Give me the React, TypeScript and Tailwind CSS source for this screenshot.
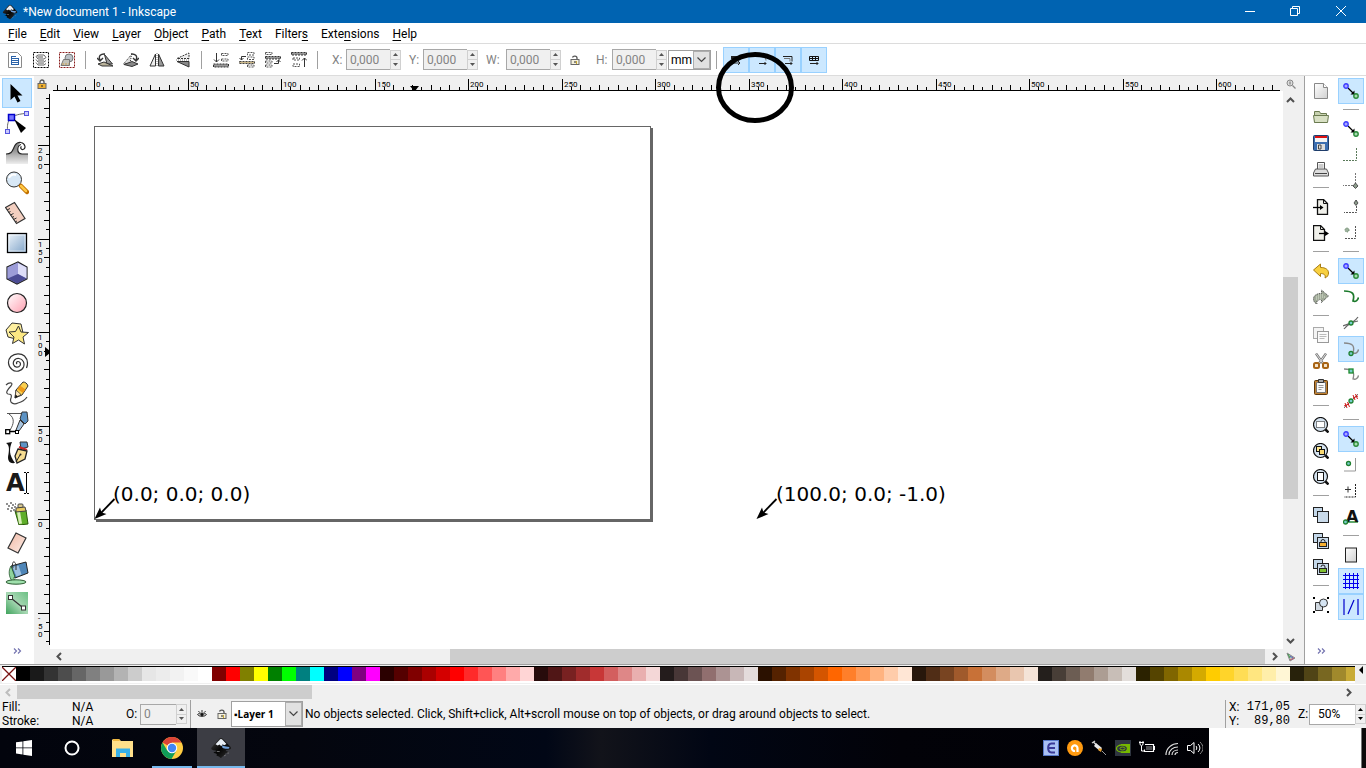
import type { ReactNode } from 'react';
import clsx from 'clsx';

// ─── Icon helpers ────────────────────────────────────────────────────────────

function Svg16({ children }: { children: ReactNode }) {
  return (
    <svg viewBox="0 0 16 16" className="w-4 h-4 shrink-0" fill="none" aria-hidden="true">
      {children}
    </svg>
  );
}

function Svg24({ children }: { children: ReactNode }) {
  return (
    <svg viewBox="0 0 24 24" className="w-6 h-6 shrink-0" fill="none" aria-hidden="true">
      {children}
    </svg>
  );
}

function Chevron({ dir, color = '#505050' }: { dir: 'up' | 'down' | 'left' | 'right'; color?: string }) {
  const points = {
    up:    '1,6 4.5,2.5 8,6',
    down:  '1,3 4.5,6.5 8,3',
    left:  '6,1 2.5,4.5 6,8',
    right: '3,1 6.5,4.5 3,8',
  };
  return (
    <svg viewBox="0 0 9 9" className="w-[9px] h-[9px]" fill="none" aria-hidden="true">
      <polyline points={points[dir]} stroke={color} strokeWidth="2" />
    </svg>
  );
}

function InkscapeLogo({ className }: { className: string }) {
  return (
    <svg viewBox="0 0 24 24" className={className} aria-hidden="true">
      <defs>
        <linearGradient id="ink" x1="0" y1="0" x2="1" y2="1">
          <stop offset="0" stopColor="#444" />
          <stop offset="0.5" stopColor="#050505" />
          <stop offset="1" stopColor="#333" />
        </linearGradient>
      </defs>
      <path d="M12 1.2c1 0 1.6.5 2.3 1.2l8 8.3c1.4 1.5.7 2.5-.8 3-2 .6-4.4.4-4.3 1.2.1.7 2.5.5 2.8 1.4.2.8-2.3 1-3.2 1.6-1 .7 0 1.5-1.5 2.2-1 .5-1.5 1-2.6 2.3-.6.7-1.4.6-2-.2-.8-1-2.5-1.3-3.5-2-.8-.6.9-1 .2-1.6-.8-.7-3.2-.6-3.5-1.6-.3-.8 2.8-.6 3-1.4.2-.8-3-.8-4.5-1.7-1.2-.7-1.5-1.7-.5-2.8l7.8-8.7c.7-.8 1.3-1.2 2.3-1.2z" fill="url(#ink)" />
      <path d="M12 2.2c.7 0 1.1.4 1.6.9l4.4 4.6-2.6 1.2-1.6-.9-1.5 2-1.9-1.7-2 .9-2.3-1.3 4.3-4.7c.5-.6.9-1 1.6-1z" fill="#e8eef5" />
      <path d="M13 9l3 1 4.8.8c.8.8.2 1.5-.9 1.9-2.3.7-4.6-.2-6.4-1z" fill="#6f9fd8" />
      <path d="M7.5 15.8h3M15.5 20.5l1.5-.6M19 17.5h1.5" stroke="#999" strokeWidth="0.8" />
    </svg>
  );
}

// ─── Selector toolbar icons ──────────────────────────────────────────────────

const INK = '#333';

const selectAllIcons: Array<[string, ReactNode]> = [
  ['Select all', <>
    <path d="M1.5 0.5h9l4 4v11h-13z" fill="#fff" stroke="#8a8a8a" />
    <path d="M4 4.5h5M4 6.5h8M4 8.5h8M4 10.5h8M4 12.5h8M4.5 4v9M11.5 6v7" stroke="#2a62a8" />
  </>],
  ['Select all in all layers', <>
    <rect x="0.5" y="0.5" width="15" height="15" stroke="#000" strokeDasharray="2 1" />
    <path d="M3 4.5l2-1.5h6l2 2.5-2 1.5H5zM3 7.5L5 10h6l2-1.5M3 10.5L5 13h6l2-1.5" stroke="#666" />
    <path d="M4 4h6v2H5zM5 8h6v1H5zM5 11h6v1H5z" fill="#aaa" />
  </>],
  ['Deselect', <>
    <rect x="0.5" y="0.5" width="15" height="15" stroke="#8a1c1c" strokeDasharray="2 1" />
    <circle cx="10" cy="6" r="4" fill="#bcc2c8" stroke="#777" />
    <path d="M2 13.5l2.5-6h6v6z" fill="#c3c3bb" stroke="#777" />
    <path d="M3 12h7" stroke="#c8a050" strokeDasharray="2 1" />
  </>],
];

const rotateIcons: Array<[string, ReactNode]> = [
  ['Rotate counter-clockwise', <>
    <path d="M3 8C1 4 4 1.5 8 2M0 6l3 3 3-3" stroke={INK} strokeWidth="1.4" />
    <path d="M7.5 2.5l8 9.5H10z" fill="#999" stroke={INK} />
    <path d="M1 12l6-2 9 4H5z" fill="#b9b29a" stroke={INK} />
  </>],
  ['Rotate clockwise', <>
    <path d="M13 8c2-4-1-6.5-5-6M10 6l3 3 3-3" stroke={INK} strokeWidth="1.4" />
    <path d="M8.5 2.5L0.5 12H7z" fill="#ddd" stroke={INK} strokeDasharray="1 1" />
    <path d="M1 12.5l8-3 6 2.5-6 2.5z" fill="#888" stroke={INK} />
  </>],
  ['Flip horizontal', <>
    <path d="M6.5 2v12H1z" fill="#eee" stroke={INK} />
    <path d="M9.5 2v12H15z" fill="#999" stroke={INK} />
    <path d="M8 1v14" stroke="#777" strokeDasharray="1 1" />
  </>],
  ['Flip vertical', <>
    <path d="M14 6.5H2L14 1z" fill="#eee" stroke={INK} strokeDasharray="2 1" />
    <path d="M14 9.5H2L14 15z" fill="#888" stroke={INK} />
    <path d="M1 8h14" stroke="#777" strokeDasharray="1 1" />
  </>],
];

const orderIcons: Array<[string, ReactNode]> = [
  ['Lower to bottom', <>
    <path d="M3.5 1v9M1 7.5L3.5 10 6 7.5" stroke={INK} />
    <path d="M8.5 1.5H15v2H8.5zM8.5 7H15v2H8.5z" stroke="#555" strokeDasharray="2 1" />
    <path d="M0.5 12h15v3h-15z" fill="#999" stroke="#333" strokeDasharray="2 1" />
  </>],
  ['Lower', <>
    <path d="M7 4.5H2.5V8M0.5 6l2 2 2-2" stroke={INK} />
    <path d="M8.5 0.5H15v2.5H8.5zM8.5 5H15v2.5H8.5zM8.5 13H15v2H8.5z" stroke="#555" strokeDasharray="2 1" />
    <path d="M0.5 9.5h15v2h-15z" fill="#cdb98a" stroke="#444" strokeDasharray="2 1" />
  </>],
  ['Raise', <>
    <path d="M9 11.5h4.5V8M11.5 10l2-2 2 2" stroke={INK} />
    <path d="M0.5 0.5H7v2H0.5zM0.5 9H7v2H0.5zM0.5 13H7v2H0.5z" stroke="#555" strokeDasharray="2 1" />
    <path d="M0.5 4.5h15v2.5h-15z" fill="#999" stroke="#333" strokeDasharray="2 1" />
  </>],
  ['Raise to top', <>
    <path d="M13.5 15V6M11 8.5L13.5 6 16 8.5" stroke={INK} />
    <path d="M0.5 0.5h15v2.5h-15z" fill="#999" stroke="#333" strokeDasharray="2 1" />
    <path d="M2 6h6.5v2H2zM2 12h6.5v2.5H2z" stroke="#555" strokeDasharray="2 1" />
  </>],
];

const transformIcons: Array<[string, ReactNode]> = [
  ['Scale stroke width', <>
    <path d="M3 4h9v3H3z" fill="#222" />
    <path d="M5 11h7M10 9l2 2-2 2" stroke="#222" />
  </>],
  ['Scale rounded corners', <>
    <path d="M4 4.5h4c2.5 0 4 1.5 4 4" stroke="#777" />
    <path d="M5 11.5h7M10.5 10l1.5 1.5-1.5 1.5" stroke="#222" />
  </>],
  ['Move gradients', <>
    <path d="M3 4.5h9v5" stroke="#222" />
    <path d="M4 6.5h6v3" stroke="#777" />
    <path d="M5 11.5h7M10.5 10l1.5 1.5-1.5 1.5" stroke="#222" />
  </>],
  ['Move patterns', <>
    <path d="M3.5 4.5h9v4h-9zM3.5 6.5h9M6.5 4.5v4M9.5 4.5v4" stroke="#111" />
    <path d="M4 11.5h8M10.5 10l1.5 1.5-1.5 1.5" stroke="#222" />
  </>],
];

function Padlock({ open = false }: { open?: boolean }) {
  return (
    <svg viewBox="0 0 10 10" className="w-[10px] h-[10px]" fill="none" aria-hidden="true">
      <path d={open ? 'M2.5 2.5C3 .5 7 .5 7 3v2' : 'M3 5V3a2 2 0 0 1 4 0v2'} stroke="#555" strokeWidth="1.3" />
      <rect x="1" y="4.5" width="8" height="5" fill={open ? '#f4f0dc' : '#f0b030'} stroke="#666" />
      <path d="M5 6v2" stroke="#222" />
      {open && <path d="M6.5 6v3" stroke="#c8a830" />}
    </svg>
  );
}

// ─── Toolbox icons ───────────────────────────────────────────────────────────

const toolIcons: Array<[string, ReactNode]> = [
  ['Selector', <path d="M5.5 3v16l4-3.5 3 6 3-1.5-3-5.5h5z" fill="#000" />],
  ['Edit paths by nodes', <>
    <path d="M2.5 19C2 10 4 4 20 2.5" stroke="#666" />
    <rect x="0.5" y="18.5" width="4" height="4" fill="#c9c9ff" stroke="#5555dd" />
    <rect x="19.5" y="0.5" width="4" height="4" fill="#c9c9ff" stroke="#5555dd" />
    <rect x="3.5" y="3.5" width="6" height="6" fill="#7777ff" stroke="#0000cc" strokeWidth="1.5" />
    <path d="M9 8l12 9-5 5z" fill="#000" />
  </>],
  ['Tweak objects', <>
    <path d="M1 13c5 0 6-2 7.5-5.5C10 3 13 1 16 1.5c-1 .5-4 3-3.5 7 .3 3 2 4.5 4.5 4.5h6v10H1z" fill="url(#waveFill)" />
    <path d="M1 13c5 0 6-2 7.5-5.5C10 3 13 1 16 1.5c4 .5 5.5 6 2 7-2 .3-3-2-1.5-3M16 3.5c-4 1-5 9 1 9.5h6" stroke="#222" strokeWidth="1.2" />
  </>],
  ['Zoom', <>
    <circle cx="9" cy="8.5" r="7.5" fill="#d8e8f6" stroke="#333" />
    <path d="M4 7c1-3 4-4 7-3" stroke="#fff" strokeWidth="2" />
    <path d="M16 15l6 6" stroke="#c07000" strokeWidth="4.5" strokeLinecap="round" />
    <path d="M16 15l5 5" stroke="#ffc844" strokeWidth="2.5" strokeLinecap="round" />
  </>],
  ['Measurement', <>
    <path d="M0.5 6.5L9.5 1.5 20 17.5l-8.5 5z" fill="#f3cfc0" stroke="#333" strokeWidth="1.2" />
    <path d="M2 9l3-1.5M3.5 11.5l2-1M5.5 14l3-1.5M7 16.5l2-1M8.5 18.5l3-1.5M10 21l2-1" stroke="#333" />
  </>],
  ['Rectangle', <>
    <rect x="2.5" y="2.5" width="19" height="19" fill="url(#rectFill)" stroke="#000" strokeWidth="1.3" />
    <rect x="4" y="4" width="16" height="16" stroke="#fff" strokeOpacity="0.6" />
  </>],
  ['3D box', <>
    <path d="M2 6l11-5 9 5v12l-10 5-10-5z" fill="#8484c8" stroke="#222" strokeWidth="1.2" />
    <path d="M2.5 6.5L13 1.5V13L2.5 17.5z" fill="#9c9cd8" />
    <path d="M13 2l8.5 4.5V17.5L13 13z" fill="#dedef8" />
    <path d="M3 17.5L13 13l8.5 4.5L12 22.5z" fill="#4b4b94" />
  </>],
  ['Ellipse', <circle cx="12" cy="12" r="9.5" fill="url(#circleFill)" stroke="#222" strokeWidth="1.2" />],
  ['Star', <>
    <path d="M1 9l6-7 9 1 2 9-7 6-8-2z" fill="#fff0a0" stroke="#333" />
    <path d="M13.5 5l2.5 6 7.5.5-5.5 4.5 1.5 7-6-4-6 3.5 1.5-6.5-5-5 6.5-.5z" fill="#fce883" stroke="#333" />
  </>],
  ['Spiral', <path d="M12 13c-1-1-.5-2.5 1-2.5 2 0 3 2 2 4-1.5 2.5-5.5 2-6.5-1-1-3.5 2-6.5 5.5-6 4 .5 6 4.5 4.5 8.5-2 4.5-8 5.5-11.5 2.5C2.5 15 2.5 9 6 5.5 10 2 16 2 19.5 5c3 3 3.5 8 2 12" stroke="#333" strokeWidth="1.2" />],
  ['Pencil', <>
    <path d="M1 4c3-3 8-3 5 1-3 3-6 7-3 8 3 0 4 1 3 4-2 5 3 7 7 5 4-1 7-3 9-6" stroke="#444" strokeWidth="1.2" />
    <path d="M10 17l1-8 7-8c2 0 4 1 5 4l-6 9z" fill="#fbd050" stroke="#333" />
    <path d="M15 4.5l5.5 4L18 12l-5.5-4z" fill="#ee9a18" />
    <path d="M10 17l1-8 5 4.5z" fill="#fbe8c0" stroke="#333" strokeWidth="0.7" />
    <path d="M10 17l.5-3.5 2.5 2z" fill="#111" />
  </>],
  ['Bezier', <>
    <path d="M4 3c6 4 5 10 1 16M2 2.5h15" stroke="#555" />
    <path d="M17 1h5l1 9-3 3-5-5z" fill="#5d93c4" stroke="#333" />
    <path d="M15 9l4 4-5 7-3-1z" fill="#a8c4de" stroke="#333" />
    <path d="M4 20.5h9" stroke="#000" strokeWidth="1.5" />
    <rect x="0.7" y="18.7" width="4" height="4" fill="#fff" stroke="#000" strokeWidth="1.3" />
    <rect x="10.5" y="19.5" width="3" height="3" fill="#fff" stroke="#000" />
  </>],
  ['Calligraphy', <>
    <path d="M1 2l6-1c-3 7-3 13 3 21-6 1-8-3-6.5-9C4.5 7 4 4 1 2z" fill="#111" />
    <path d="M15 1h7l1 5-7 2z" fill="#5d93c4" stroke="#333" />
    <path d="M14 6l8 3" stroke="#c22" strokeWidth="2" />
    <path d="M13 8l9 2-2 8-8 4-2-7z" fill="#f6dc90" stroke="#222" strokeWidth="1.3" />
    <path d="M11 21l4-7" stroke="#222" />
    <circle cx="15.5" cy="13.5" r="1" fill="#222" />
  </>],
  ['Text', <>
    <path d="M21.5 2v20M19 1.5h2M22 1.5h2M19 22.5h2M22 22.5h2" stroke="#000" />
    <text x="1" y="20" fontSize="24" fontWeight="700" fontFamily="DejaVu Sans, sans-serif" fill="#1a1a1a">A</text>
  </>],
  ['Spray', <>
    <path d="M1 3h2M5 2h2M3 5h2M7 4h2M2 8h2M6 7h2M9 6h2M5 10h2M8 9h2M10 3h1" stroke="#222" strokeWidth="1.2" />
    <rect x="13" y="3" width="5" height="4" rx="1" fill="#d8c890" stroke="#444" />
    <path d="M10 10l11-1 2 14-9 1z" fill="#5fae2a" stroke="#2a5a08" />
    <path d="M12 11l3-.5 2 12-3 .5z" fill="#d8f0b8" />
    <path d="M11 7l9-1 1 4-10 1z" fill="#e8c860" stroke="#444" />
  </>],
  ['Eraser', <path d="M11 2l10 5-8 15-10-5z" fill="url(#eraserFill)" stroke="#333" strokeWidth="1.2" />],
  ['Paint bucket', <>
    <path d="M6 5l15-4 2 11-13 5z" fill="#4f86b8" stroke="#222" />
    <path d="M7.5 6l6-1.5 3 9-5 2z" fill="#9dc0de" />
    <path d="M8 7c-2-7 2-8 3-3v5" stroke="#333" />
    <path d="M6 5c-3 5-2 11 1 15h3c-1-3-2-4 0-4z" fill="#8fd49c" stroke="#2a5a30" strokeWidth="0.8" />
    <ellipse cx="11" cy="21" rx="10" ry="2.2" fill="#9fe0ac" stroke="#2a5a30" />
  </>],
  ['Gradient', <>
    <rect x="1" y="1" width="22" height="22" fill="url(#greenFill)" />
    <path d="M6 7l11 9" stroke="#333" strokeWidth="1.2" />
    <rect x="3.5" y="4.5" width="4" height="4" fill="#fff" stroke="#333" />
    <rect x="16.5" y="15" width="4" height="4" fill="#fff" stroke="#333" />
  </>],
];

function SharedGradients() {
  return (
    <svg className="absolute w-0 h-0" aria-hidden="true">
      <defs>
        <linearGradient id="waveFill" x1="0" y1="0" x2="0" y2="1">
          <stop offset="0.3" stopColor="#8a8a8a" />
          <stop offset="1" stopColor="#eee" />
        </linearGradient>
        <linearGradient id="rectFill" x1="0" y1="0" x2="1" y2="1">
          <stop offset="0" stopColor="#eef5fb" />
          <stop offset="1" stopColor="#7fa3c8" />
        </linearGradient>
        <linearGradient id="circleFill" x1="0" y1="0" x2="1" y2="1">
          <stop offset="0" stopColor="#fff" />
          <stop offset="1" stopColor="#ff9fb0" />
        </linearGradient>
        <linearGradient id="eraserFill" x1="0" y1="0" x2="1" y2="1">
          <stop offset="0" stopColor="#f0b8a4" />
          <stop offset="1" stopColor="#fdeee8" />
        </linearGradient>
        <linearGradient id="greenFill" x1="0" y1="1" x2="1" y2="0">
          <stop offset="0" stopColor="#3fa35c" />
          <stop offset="0.5" stopColor="#a8d8b4" />
          <stop offset="1" stopColor="#6cc084" />
        </linearGradient>
        <linearGradient id="greyFill" x1="0" y1="0" x2="1" y2="1">
          <stop offset="0" stopColor="#fff" />
          <stop offset="1" stopColor="#d0d0d0" />
        </linearGradient>
      </defs>
    </svg>
  );
}

// ─── Command bar icons ───────────────────────────────────────────────────────

interface BarItem {
  label: string;
  icon: ReactNode;
  pressed?: boolean;
}

const lens = (
  <>
    <circle cx="7.5" cy="7.5" r="7" fill="#d5e3f0" stroke="#111" strokeWidth="1.2" />
    <path d="M12.5 12.5l3 3" stroke="#111" strokeWidth="2.5" />
  </>
);

const stackedPages = (
  <>
    <rect x="0.5" y="0.5" width="9" height="9" fill="#c4d8ea" stroke="#222" />
    <rect x="4.5" y="4.5" width="11" height="11" fill="#c9daea" stroke="#222" />
  </>
);

const commandGroups: BarItem[][] = [
  [
    { label: 'New', icon: <><path d="M1.5 0.5h9l4 4v11h-13z" fill="url(#greyFill)" stroke="#888" /><path d="M10.5 0.5v4h4" fill="#fff" stroke="#888" /></> },
    { label: 'Open', icon: <><path d="M1.5 13.5v-11h5l1 2h6v3" fill="#c8d2b0" stroke="#6a7a50" /><path d="M0.5 6.5h15l-1 7h-13z" fill="#d8e0c4" stroke="#6a7a50" /></> },
    { label: 'Save', icon: <><rect x="0.5" y="0.5" width="15" height="15" rx="1" fill="#3c6eb0" stroke="#1e3c6a" /><path d="M2 1h12v6H2z" fill="#f4f4f4" /><path d="M2 1h12v2H2z" fill="#dd1111" /><path d="M4 9h8v6H4z" fill="#ddd" /><path d="M5.5 10h2.5v4H5.5z" stroke="#444" /></> },
    { label: 'Print', icon: <><path d="M4.5 8V1.5h7V8" fill="#fff" stroke="#555" /><path d="M5.5 4h5M5.5 6h5" stroke="#999" /><path d="M2.5 8h11l2 4v3H0.5v-3z" fill="#ddd" stroke="#555" /><path d="M2 12.5h12" stroke="#444" /></> },
  ],
  [
    { label: 'Import', icon: <><path d="M4.5 0.5h6l4 4v11h-10z" fill="#f0f0ea" stroke="#111" strokeWidth="1.3" /><path d="M10.5 0.5v4h4" stroke="#111" /><path d="M0 8.5h8" stroke="#000" strokeWidth="1.3" /><path d="M7 6l3.5 2.5L7 11z" fill="#000" /></> },
    { label: 'Export', icon: <><path d="M0.5 0.5h7l4 4v11h-11z" fill="#f0f0ea" stroke="#111" strokeWidth="1.3" /><path d="M7.5 0.5v4h4" stroke="#111" /><path d="M6 8.5h7" stroke="#000" strokeWidth="1.3" /><path d="M12 6l4 2.5-4 2.5z" fill="#000" /></> },
  ],
  [
    { label: 'Undo', icon: <path d="M0.5 7l7-6v3.5c5 0 8 2 8 5.5 0 2-1 4-3.5 5 1-3-1-4.5-4.5-4.5v3z" fill="#f8d040" stroke="#a87c10" /> },
    { label: 'Redo', icon: <><path d="M15.5 7l-7-6v3.5c-5 0-8 2-8 5.5 0 2 1 4 3.5 5-1-3 1-4.5 4.5-4.5v3z" fill="#a0aa98" stroke="#444" strokeDasharray="1 1" /><path d="M3 8h10M3 10h6M5 6h6" stroke="#dde5d5" strokeDasharray="1 1" /></> },
  ],
  [
    { label: 'Copy', icon: <><rect x="0.5" y="0.5" width="10" height="11" fill="#f4f4f4" stroke="#aaa" /><rect x="4.5" y="4.5" width="11" height="11" fill="#fafafa" stroke="#999" /><path d="M6.5 7.5h7M6.5 9.5h7M6.5 11.5h5" stroke="#bbb" /></> },
    { label: 'Cut', icon: <><path d="M3 0.5l7 10M13 0.5l-7 10" stroke="#777" strokeWidth="2.4" /><path d="M3 0.5l7 10M13 0.5l-7 10" stroke="#ddd" /><rect x="1" y="10" width="5" height="5" rx="1.5" fill="#f4e4cc" stroke="#a86414" strokeWidth="2" /><rect x="10" y="10" width="5" height="5" rx="1.5" fill="#f4e4cc" stroke="#a86414" strokeWidth="2" /></> },
    { label: 'Paste', icon: <><rect x="1.5" y="1.5" width="13" height="14" rx="1" fill="#c08030" stroke="#5a3408" /><path d="M3.5 3.5h9v10h-9z" fill="#fafafa" stroke="#777" /><path d="M5.5 0.5h5v3h-5z" fill="#aaa" stroke="#333" /><path d="M5.5 6.5h5M5.5 8.5h5M5.5 10.5h3" stroke="#999" /></> },
  ],
  [
    { label: 'Zoom selection', icon: <>{lens}<rect x="3.5" y="4.5" width="8" height="6" fill="#fff" stroke="#111" strokeDasharray="1 1" /></> },
    { label: 'Zoom drawing', icon: <>{lens}<rect x="3.5" y="3.5" width="5" height="5" fill="#ffe890" stroke="#111" /><rect x="6.5" y="6.5" width="5" height="5" fill="#f8d870" stroke="#111" /></> },
    { label: 'Zoom page', icon: <>{lens}<rect x="4.5" y="3.5" width="6" height="8" fill="#fff" stroke="#111" /></> },
  ],
  [
    { label: 'Duplicate', icon: stackedPages },
    { label: 'Create clone', icon: <>{stackedPages}<path d="M8 10V8.5a2 2 0 0 1 4 0V10" stroke="#222" /><rect x="6.5" y="9.5" width="7" height="4" fill="#f8b030" stroke="#222" /></> },
    { label: 'Unlink clone', icon: <>{stackedPages}<path d="M8 8a2 2 0 0 1 4 0v2" stroke="#222" /><rect x="6.5" y="9.5" width="7" height="4" fill="#80c030" stroke="#222" /></> },
  ],
  [
    { label: 'Group', icon: <><path d="M0 0h2v2H0zM14 0h2v2h-2zM0 14h2v2H0zM14 14h2v2h-2z" fill="#000" /><path d="M2.5 5.5h7v8h-7z" fill="#d0d8e0" stroke="#333" /><circle cx="10.5" cy="6" r="4" fill="#d5e4f2" stroke="#333" /></> },
  ],
];

// ─── Snap bar icons ──────────────────────────────────────────────────────────

const snapMain = (
  <>
    <path d="M5 5l6 6" stroke="#000" strokeWidth="1.3" />
    <path d="M11.5 7.5v4h-4z" fill="#000" />
    <circle cx="3" cy="3" r="2.2" fill="#a8a8ff" stroke="#3c3cff" strokeWidth="1.4" />
    <circle cx="13" cy="13" r="2.2" fill="#a8dcb0" stroke="#2a8a3a" strokeWidth="1.4" />
  </>
);

const nodeAt = (x: number, y: number) => (
  <circle cx={x} cy={y} r="2" fill="#7cc" stroke="#1f8030" strokeWidth="1.3" />
);

const snapGroups: BarItem[][] = [
  [{ label: 'Enable snapping', icon: snapMain, pressed: true }],
  [
    { label: 'Snap bounding boxes', icon: snapMain },
    { label: 'Snap to edges', icon: <path d="M13.5 1v12.5H0" stroke="#5a7a5a" strokeDasharray="2 1" /> },
    { label: 'Snap to corners', icon: <><path d="M12.5 0v12.5H0" stroke="#777" strokeDasharray="2 1" /><path d="M12.5 10l2.5 3-2.5 2.5L10 13z" fill="#8a9a8a" stroke="#555" /></> },
    { label: 'Snap edge midpoints', icon: <><path d="M13.5 1v12.5H1" stroke="#555" strokeDasharray="2 1" /><path d="M13 1l2 3-2 2.5L11 4z" fill="#8a9a8a" stroke="#555" /></> },
    { label: 'Snap centers', icon: <><path d="M12.5 1v12.5H1" stroke="#555" strokeDasharray="2 1" /><circle cx="4" cy="5" r="2" fill="#9cb09c" stroke="#567a56" strokeDasharray="1 1" /></> },
  ],
  [
    { label: 'Snap nodes', icon: snapMain, pressed: true },
    { label: 'Snap to paths', icon: <path d="M1 2c9 0 11 3 9 10 3 1 5-1 5.5-3.5" stroke="#1c7a2c" strokeWidth="1.7" /> },
    { label: 'Snap path intersections', icon: <><path d="M0 11C5 9 11 8 15 2M1 14c4-5 8-7 14-8" stroke="#666" strokeWidth="1.2" />{nodeAt(8, 8)}</> },
    { label: 'Snap cusp nodes', icon: <><path d="M1 2c9 0 11 3 9 10 3 1 5-1 5.5-3.5" stroke="#888" strokeWidth="1.4" />{nodeAt(8, 12.5)}</>, pressed: true },
    { label: 'Snap smooth nodes', icon: <><path d="M1 2c9 0 11 3 9 10 3 1 5-1 5.5-3.5" stroke="#888" strokeWidth="1.3" /><rect x="6" y="2" width="4" height="4" fill="#7cc" stroke="#1c8a2c" strokeWidth="1.3" /></> },
    { label: 'Snap line midpoints', icon: <><path d="M1 15l14-14" stroke="#777" />{nodeAt(8, 8)}<path d="M2 10l2 5M4.5 9l2 5M1 13l5-2M10 2l2 5M12.5 1l2 5M10 5l5-2" stroke="#d01818" /></> },
  ],
  [
    { label: 'Snap other points', icon: snapMain, pressed: true },
    { label: 'Snap object centers', icon: <><path d="M12.5 1v13H1" stroke="#999" />{nodeAt(5.5, 6.5)}</> },
    { label: 'Snap rotation centers', icon: <><path d="M12.5 1v13H1" stroke="#222" strokeDasharray="2 1" /><path d="M2 6.5h6M5 3.5v6" stroke="#333" /></> },
    { label: 'Snap text baseline', icon: <><path d="M1 13h14" stroke="#2a8a3a" strokeWidth="1.5" /><text x="3" y="13" fontSize="16" fontWeight="700" fontFamily="DejaVu Sans, sans-serif" fill="#111">A</text>{nodeAt(2.5, 13)}</> },
  ],
  [
    { label: 'Snap to page border', icon: <rect x="2.5" y="1" width="11" height="14" fill="url(#greyFill)" stroke="#222" /> },
    { label: 'Snap to grids', icon: <path d="M2.5 0v16M6.5 0v16M10.5 0v16M14.5 0v16M0 2.5h16M0 6.5h16M0 10.5h16M0 14.5h16" stroke="#0000ee" />, pressed: true },
    { label: 'Snap guides', icon: <path d="M1 0v16M15 0v16M5 15L11 1" stroke="#0000cc" strokeWidth="1.2" />, pressed: true },
  ],
];

// ─── Palette ─────────────────────────────────────────────────────────────────

const PALETTE = (
  '000000 1a1a1a 333333 4d4d4d 666666 808080 999999 b3b3b3 cccccc e6e6e6 ececec f2f2f2 f9f9f9 ffffff ' +
  '800000 ff0000 808000 ffff00 008000 00ff00 008080 00ffff 000080 0000ff 800080 ff00ff ' +
  '2b0000 550000 800000 aa0000 d40000 ff0000 ff2a2a ff5555 ff8080 ffaaaa ffd5d5 ' +
  '280b0b 501616 782121 a02c2c c83737 d35f5f de8787 e9afaf f4d7d7 ' +
  '241c1c 483737 6c5353 916f6f ac9393 c8b7b7 e3dbdb ' +
  '2b1100 552200 803300 aa4400 d45500 ff6600 ff7f2a ff9955 ffb380 ffccaa ffe6d5 ' +
  '28170b 502d16 784421 a05a2c c87137 d38d5f deaa87 e9c6af f4e3d7 ' +
  '241f1c 483e37 6c5d53 917c6f ac9d93 c8beb7 e3dedb ' +
  '2b2200 554400 806600 aa8800 d4aa00 ffcc00 ffd42a ffdd55 ffe680 ffeeaa fff6d5 ' +
  '28220b 504416 786721 a0892c c8ab37 d3bc5f decd87 e9ddaf f4eed7'
).split(' ');

// ─── Shared controls ─────────────────────────────────────────────────────────

function VSep() {
  return (
    <div className="w-3 h-[18px] flex pl-[5px] shrink-0">
      <div className="w-px h-full bg-[#a0a0a0]" />
    </div>
  );
}

function IconButton({ label, children, pressed = false }: { label: string; children: ReactNode; pressed?: boolean }) {
  return (
    <button
      type="button"
      aria-label={label}
      title={label}
      className={clsx(
        'w-[26px] h-[26px] shrink-0 flex items-center justify-center border',
        pressed ? 'bg-[#cce8ff] border-[#99d1ff]' : 'border-transparent',
      )}
    >
      <Svg16>{children}</Svg16>
    </button>
  );
}

interface SpinProps {
  id: string;
  value: string;
  width: string;
  disabled?: boolean;
}

function Spin({ id, value, width, disabled = false }: SpinProps) {
  return (
    <div className="flex items-center">
      <input
        id={id}
        type="text"
        defaultValue={value}
        disabled={disabled}
        className={clsx(
          'h-[21px] border border-r-0 border-[#a8a8a8] outline-none',
          width,
          disabled ? 'pl-[3px] bg-[#f0f0f0] text-[#838383]' : 'pl-2 bg-white text-black',
        )}
      />
      <div className="w-[11px] h-5 flex flex-col bg-[#f0f0f0] border border-[#d0d0d0]">
        {(['Increase', 'Decrease'] as const).map((name, i) => (
          <button
            key={name}
            type="button"
            aria-label={name}
            className={clsx('flex-1 flex items-center justify-center', i === 0 && 'border-b border-[#d0d0d0]')}
          >
            <svg viewBox="0 0 5 3" className="w-[5px] h-[3px]" aria-hidden="true">
              <path d={i === 0 ? 'M0 3L2.5 0 5 3z' : 'M0 0L2.5 3 5 0z'} fill={disabled ? '#555' : '#000'} />
            </svg>
          </button>
        ))}
      </div>
    </div>
  );
}

interface DropDownProps {
  label: string;
  value: string;
  className: string;
  textClass?: string;
}

function DropDown({ label, value, className, textClass }: DropDownProps) {
  return (
    <div className={clsx('relative border border-[#a0a0a0] bg-white', className)}>
      <select aria-label={label} className={clsx('w-full h-full pl-[2px] pr-4 appearance-none outline-none', textClass)}>
        <option>{value}</option>
      </select>
      <div className="absolute inset-y-0 right-0 w-[17px] flex items-center justify-center bg-[#e1e1e1] border border-[#adadad] pointer-events-none">
        <svg viewBox="0 0 9 6" className="w-[9px] h-[6px]" fill="none" aria-hidden="true">
          <polyline points="0.5,0.5 4.5,4.5 8.5,0.5" stroke="#444" strokeWidth="1.2" />
        </svg>
      </div>
    </div>
  );
}

// ─── Window chrome ───────────────────────────────────────────────────────────

function TitleBar() {
  return (
    <header className="h-[23px] shrink-0 flex items-center bg-[#0063b1] text-white">
      <InkscapeLogo className="w-4 h-4 ml-[2px] mr-[5px]" />
      <h1 className="flex-1">*New document 1 - Inkscape</h1>
      <div className="flex pr-px pb-[2px]">
        <button type="button" aria-label="Minimize" className="w-[45px] h-5 flex items-center justify-center">
          <svg viewBox="0 0 10 10" className="w-[10px] h-[10px]" fill="none"><path d="M0 5.5h10" stroke="currentColor" /></svg>
        </button>
        <button type="button" aria-label="Restore" className="w-[45px] h-5 flex items-center justify-center">
          <svg viewBox="0 0 10 10" className="w-[10px] h-[10px]" fill="none"><path d="M0.5 2.5h7v7h-7zM2.5 2.5v-2h7v7h-2" stroke="currentColor" /></svg>
        </button>
        <button type="button" aria-label="Close" className="w-12 h-5 flex items-center justify-center">
          <svg viewBox="0 0 10 10" className="w-[10px] h-[10px]" fill="none"><path d="M0 0l10 10M10 0L0 10" stroke="currentColor" /></svg>
        </button>
      </div>
    </header>
  );
}

const MENUS = ['_File', '_Edit', '_View', '_Layer', '_Object', '_Path', '_Text', 'Filter_s', 'Exte_nsions', '_Help'];

function MenuBar() {
  return (
    <nav className="h-[21px] shrink-0 flex items-center gap-[13px] px-2 pt-px bg-white border-b border-[#dcdcdc]">
      {MENUS.map((item) => {
        const [before, rest] = item.split('_');
        return (
          <button key={item} type="button">
            {before}<span className="underline underline-offset-2">{rest[0]}</span>{rest.slice(1)}
          </button>
        );
      })}
    </nav>
  );
}

function ControlBar() {
  const label = 'text-[#838383]';
  return (
    <div className="h-8 shrink-0 flex items-center pl-[2px] bg-white border-b border-[#dcdcdc]">
      {selectAllIcons.map(([name, icon]) => <IconButton key={name} label={name}>{icon}</IconButton>)}
      <VSep />
      {rotateIcons.map(([name, icon]) => <IconButton key={name} label={name}>{icon}</IconButton>)}
      <VSep />
      {orderIcons.map(([name, icon]) => <IconButton key={name} label={name}>{icon}</IconButton>)}
      <VSep />
      <div className="flex items-center pl-2 pr-px">
        <label htmlFor="pos-x" className={clsx(label, 'w-[14px]')}>X:</label>
        <Spin id="pos-x" value="0,000" width="w-11" disabled />
        <label htmlFor="pos-y" className={clsx(label, 'w-[14px] ml-2')}>Y:</label>
        <Spin id="pos-y" value="0,000" width="w-11" disabled />
        <label htmlFor="size-w" className={clsx(label, 'w-5 ml-2')}>W:</label>
        <Spin id="size-w" value="0,000" width="w-11" disabled />
        <button type="button" aria-label="Lock width and height" className="w-[26px] flex justify-center ml-px">
          <Padlock open />
        </button>
        <label htmlFor="size-h" className={clsx(label, 'w-4 ml-2')}>H:</label>
        <Spin id="size-h" value="0,000" width="w-11" disabled />
      </div>
      <DropDown label="Units" value="mm" className="w-[43px] h-5 shrink-0" />
      <VSep />
      {transformIcons.map(([name, icon]) => (
        <IconButton key={name} label={name} pressed>{icon}</IconButton>
      ))}
    </div>
  );
}

function MoreButton() {
  return (
    <button type="button" aria-label="More" className="mt-auto mb-2 w-4 h-[10px] flex items-center justify-center">
      <svg viewBox="0 0 9 6" className="w-[9px] h-[6px]" fill="none" aria-hidden="true">
        <path d="M1 0.5l2.5 2.5L1 5.5M5 0.5l2.5 2.5L5 5.5" stroke="#7474b0" strokeWidth="1.2" />
      </svg>
    </button>
  );
}

function Toolbox() {
  return (
    <aside className="w-[34px] shrink-0 flex flex-col items-center pt-[2px] bg-white">
      {toolIcons.map(([name, icon], i) => (
        <button
          key={name}
          type="button"
          aria-label={name}
          title={name}
          className={clsx(
            'w-[30px] h-[30px] shrink-0 flex items-center justify-center border',
            i === 0 ? 'bg-[#cce8ff] border-[#99d1ff]' : 'border-transparent',
          )}
        >
          <Svg24>{icon}</Svg24>
        </button>
      ))}
      <MoreButton />
    </aside>
  );
}

function BarColumn({ groups, more = false }: { groups: BarItem[][]; more?: boolean }) {
  return (
    <div className="w-[30px] flex flex-col items-center pt-[2px]">
      {groups.map((group, g) => (
        <div key={group[0].label} className="flex flex-col items-center">
          {g > 0 && (
            <div className="h-3 pt-[5px]">
              <div className="w-4 h-px bg-[#a0a0a0]" />
            </div>
          )}
          {group.map((item) => (
            <IconButton key={item.label} label={item.label} pressed={item.pressed}>{item.icon}</IconButton>
          ))}
        </div>
      ))}
      {more && <MoreButton />}
    </div>
  );
}

// ─── Rulers ──────────────────────────────────────────────────────────────────

// px per 5 mm at 50% zoom
const TICK = 9.35;
const tickLength = (k: number) => (k % 10 === 0 ? 11 : k % 2 === 0 ? 5 : 3);

function range(from: number, to: number) {
  return Array.from({ length: to - from + 1 }, (_, i) => from + i);
}

function HorizontalRuler() {
  const zero = 44;
  return (
    <svg className="w-full h-[15px] block" aria-label="Horizontal ruler">
      <g shapeRendering="crispEdges">
        <rect x="3" y="14" width="100%" height="1" />
        {range(-4, 300).map((k) => (
          <rect key={k} x={Math.round(zero + k * TICK)} y={14 - tickLength(k)} width="1" height={tickLength(k)} />
        ))}
      </g>
      {range(0, 12).map((n) => (
        <text key={n} x={Math.round(zero + n * 10 * TICK) + 2} y="11" fontSize="8">{n * 50}</text>
      ))}
      <path d="M360 10h9l-4 5h-1z" />
    </svg>
  );
}

function VerticalRuler() {
  const zero = 428;
  return (
    <svg className="w-4 h-full block" aria-label="Vertical ruler">
      <g shapeRendering="crispEdges">
        <rect x="15" y="3" width="1" height="100%" />
        {range(-60, 45).filter((k) => zero - k * TICK > 3).map((k) => (
          <rect key={k} x={15 - tickLength(k)} y={Math.round(zero - k * TICK)} width={tickLength(k)} height="1" />
        ))}
      </g>
      {range(-1, 4).map((n) => (
        <g key={n} fontSize="8">
          {String(n * 50).split('').map((ch, i) => (
            <text key={i} x="4" y={Math.round(zero - n * 10 * TICK) + 8 + i * 8}>{ch}</text>
          ))}
        </g>
      ))}
      <path d="M11 256v10l5-4v-2z" />
    </svg>
  );
}

// ─── Drawing area ────────────────────────────────────────────────────────────

function Arrow({ className }: { className: string }) {
  return (
    <svg viewBox="0 0 22 22" className={clsx('absolute w-[22px] h-[22px]', className)} fill="none" aria-hidden="true">
      <path d="M20.5 1L6 16" stroke="#000" strokeWidth="1.8" />
      <path d="M0.5 21L6 9.5l1.5 5L12.5 16z" fill="#000" />
    </svg>
  );
}

function Canvas() {
  const note = "absolute text-xl leading-6 whitespace-nowrap font-['DejaVu_Sans',sans-serif]";
  return (
    <section className="relative flex-1 overflow-hidden bg-white">
      {/* Page with its drop shadow */}
      <div className="absolute left-[44px] top-[35px] w-[557px] h-[394px] border border-[#666] shadow-[2px_2px_0_#666]" />
      <Arrow className="left-[44px] top-[407px]" />
      <p className={clsx(note, 'left-[63px] top-[391px]')}>(0.0; 0.0; 0.0)</p>
      <Arrow className="left-[706px] top-[407px]" />
      <p className={clsx(note, 'left-[726px] top-[391px]')}>(100.0; 0.0; -1.0)</p>
    </section>
  );
}

function DocumentArea() {
  return (
    <div className="flex-1 min-w-0 flex flex-col bg-[#f0f0f0]">
      <div className="h-[15px] shrink-0 flex">
        <button type="button" aria-label="Lock guides" className="w-4 shrink-0 flex items-center justify-center">
          <Padlock />
        </button>
        <div className="flex-1 min-w-0 pr-[3px]"><HorizontalRuler /></div>
        <button type="button" aria-label="Zoom when resized" className="w-[15px] shrink-0 flex items-center justify-center">
          <svg viewBox="0 0 10 10" className="w-[10px] h-[10px]" fill="none" aria-hidden="true">
            <circle cx="4" cy="4" r="3" fill="#ddd" stroke="#888" />
            <path d="M6.5 6.5L9.5 9.5M4 2.5v3" stroke="#888" strokeWidth="1.3" />
          </svg>
        </button>
      </div>

      <div className="flex-1 min-h-0 flex">
        <div className="w-4 shrink-0 relative">
          <div className="absolute inset-x-0 top-0 bottom-1"><VerticalRuler /></div>
        </div>
        <Canvas />
        <div className="w-[15px] shrink-0 flex flex-col">
          <button type="button" aria-label="Scroll up" className="h-[18px] flex items-center justify-center"><Chevron dir="up" /></button>
          <div className="flex-[168]" />
          <div className="flex-[222] bg-[#cdcdcd]" />
          <div className="flex-[132]" />
          <button type="button" aria-label="Scroll down" className="h-[18px] flex items-center justify-center"><Chevron dir="down" /></button>
        </div>
      </div>

      <div className="h-[15px] shrink-0 flex pl-4">
        <button type="button" aria-label="Scroll left" className="w-4 pl-[2px] flex items-center justify-center"><Chevron dir="left" /></button>
        <div className="flex-[384]" />
        <div className="flex-[815] bg-[#cdcdcd]" />
        <button type="button" aria-label="Scroll right" className="w-[18px] flex items-center justify-center"><Chevron dir="right" /></button>
        <button type="button" aria-label="Color management" className="w-[15px] flex items-center justify-center">
          <svg viewBox="0 0 10 10" className="w-[10px] h-[10px]" fill="none" aria-hidden="true">
            <path d="M1 1l3 8 5-3z" fill="#b8c8b8" stroke="#888" />
            <path d="M2 2l2 4" stroke="#3a9a4a" />
            <path d="M4 8l4-2" stroke="#c05070" />
            <path d="M4 4l3 2" stroke="#5060c0" />
          </svg>
        </button>
      </div>
    </div>
  );
}

// ─── Bottom bars ─────────────────────────────────────────────────────────────

function PaletteBar() {
  return (
    <div className="shrink-0 bg-[#f0f0f0]">
      <div className="h-5 flex border-t border-[#a0a0a0]">
        <div className="flex-1 min-w-0 flex flex-col pl-[2px] pt-px">
          <div className="h-px bg-black" />
          <div className="h-[14px] flex overflow-hidden">
            <button type="button" aria-label="No paint" className="w-[14px] h-[14px] shrink-0 bg-white">
              <svg viewBox="0 0 14 14" className="w-[14px] h-[14px]" fill="none" aria-hidden="true">
                <path d="M0 0l14 14M14 0L0 14" stroke="#7a1414" strokeWidth="1.3" />
              </svg>
            </button>
            {PALETTE.map((hex, i) => (
              <button
                key={i}
                type="button"
                aria-label={`#${hex}`}
                className="w-[14px] h-[14px] shrink-0"
                style={{ backgroundColor: `#${hex}` }}
              />
            ))}
          </div>
          <div className="h-[2px] bg-white" />
        </div>
        <button type="button" aria-label="Palette menu" className="w-[11px] shrink-0 flex justify-center pt-px">
          <svg viewBox="0 0 4 8" className="w-1 h-2" aria-hidden="true"><path d="M4 0v8L0 4z" /></svg>
        </button>
      </div>
      <div className="h-4 flex items-center border-t border-white pb-px">
        <button type="button" aria-label="Scroll palette left" className="w-[17px] flex justify-center"><Chevron dir="left" color="#bdbdbd" /></button>
        <div className="flex-[295] h-[14px] bg-[#cdcdcd]" />
        <div className="flex-[1028]" />
        <button type="button" aria-label="Scroll palette right" className="w-[17px] mr-[9px] flex justify-center"><Chevron dir="right" /></button>
      </div>
    </div>
  );
}

function StatusBar() {
  const mono = "text-right font-['Liberation_Mono',monospace]";
  return (
    <footer className="h-7 shrink-0 flex items-center bg-[#f0f0f0]">
      <dl className="grid grid-cols-[70px_34px] leading-[14px] pl-[2px]">
        <dt>Fill:</dt><dd>N/A</dd>
        <dt>Stroke:</dt><dd>N/A</dd>
      </dl>
      <label htmlFor="opacity" className="w-[14px] ml-5">O:</label>
      <Spin id="opacity" value="0" width="w-9" disabled />
      <div className="w-px h-7 ml-[3px] bg-[#a0a0a0]" />
      <button type="button" aria-label="Toggle layer visibility" className="w-5 ml-px flex justify-center">
        <svg viewBox="0 0 10 8" className="w-[10px] h-2" fill="none" aria-hidden="true">
          <path d="M0.5 4.5C2 2.5 8 2.5 9.5 4.5 8 7 2 7 0.5 4.5z" fill="#bbb" stroke="#333" />
          <circle cx="5" cy="4.5" r="1.6" fill="#111" />
          <path d="M1.5 1l1 1.5M5 0v2M8.5 1l-1 1.5" stroke="#333" />
        </svg>
      </button>
      <button type="button" aria-label="Lock layer" className="w-[19px] flex justify-center">
        <Padlock open />
      </button>
      <DropDown label="Current layer" value="▪Layer 1" className="w-[72px] h-[26px] shrink-0" textClass="font-bold text-[10px] font-['Open_Sans',sans-serif]" />
      <p className="flex-1 min-w-0 pl-[2px] truncate">
        No objects selected. Click, Shift+click, Alt+scroll mouse on top of objects, or drag around objects to select.
      </p>
      <div className="h-7 flex items-center border-l border-[#a0a0a0] pl-[3px]">
        <dl className="grid grid-cols-[17px_44px] leading-[14px]">
          <dt>X:</dt><dd className={mono}>171,05</dd>
          <dt>Y:</dt><dd className={mono}>89,80</dd>
        </dl>
        <label htmlFor="zoom" className="w-[11px] ml-2">Z:</label>
        <Spin id="zoom" value="50%" width="w-[46px]" />
      </div>
    </footer>
  );
}

function TaskbarApp({ label, children, state }: { label: string; children: ReactNode; state?: 'running' | 'active' }) {
  return (
    <button
      type="button"
      aria-label={label}
      className={clsx(
        'w-12 h-10 flex flex-col items-center justify-end',
        state === 'active' && 'bg-[#3c3d44]',
      )}
    >
      <span className="flex-1 flex items-center pt-[2px]">{children}</span>
      <span className={clsx('h-[2px]', state && 'bg-[#76b9ed]', state === 'active' ? 'w-full' : 'w-10')} />
    </button>
  );
}

const trayIcons: Array<[string, ReactNode]> = [
  ['E-reader', <><rect x="0.5" y="0.5" width="15" height="15" fill="#a9c0f4" stroke="#5878c8" /><path d="M12 3.5H8.5C4 4 4 12 8.5 12.5H12M5.5 8H12" stroke="#3a3a98" strokeWidth="2" /></>],
  ['Antivirus', <><circle cx="8" cy="8" r="8" fill="#ff9a10" /><path d="M10.5 12V8A2.8 2.8 0 1 0 8 11" stroke="#fff" strokeWidth="2.2" /></>],
  ['Injector', <><path d="M1 3l3-2M2.5 2l3 3" stroke="#ccc" strokeWidth="1.5" /><path d="M5 3l6 5-2 3-6-5z" fill="#e8e8e8" /><path d="M8 8l3 1-1 3-3-2z" fill="#e8a030" /><path d="M11 11l4 4" stroke="#999" /></>],
  ['Graphics', <><rect width="16" height="16" fill="#2f3540" /><path d="M6 4h9v9H6z" fill="#76b900" /><ellipse cx="7" cy="8.5" rx="5.5" ry="3.5" fill="#2f3540" stroke="#76b900" strokeWidth="1.3" /><ellipse cx="7.5" cy="8.5" rx="2.5" ry="1.5" stroke="#76b900" /></>],
  ['Battery', <><path d="M6 4.5h8.5v7H5.5V9.5M14.5 6.5h1v3h-1" stroke="#fff" strokeWidth="1.2" /><path d="M7 6h6v4H7z" fill="#fff" fillOpacity="0.3" /><path d="M1 1v3c0 2 3 2 3 0V1M0 2.5h5M2.5 6v5H5" stroke="#fff" /></>],
  ['Wi-Fi', <path d="M3 15C3 8 9 3.5 15 3.5M6 15c0-5 4-8 9-8M9 15c0-3 2.5-5 6-5M12 15c0-1.5 1-2.5 3-2.5" stroke="#ddd" strokeWidth="1.2" />],
  ['Volume', <><path d="M0.5 5.5h3l3.5-3v11l-3.5-3h-3z" stroke="#fff" /><path d="M9 6c1 1 1 3 0 4M11 4c2.5 2.5 2.5 5.5 0 8" stroke="#fff" /><path d="M13 2c4 4 4 8 0 12" stroke="#888" /></>],
];

function Taskbar() {
  return (
    <div className="h-10 shrink-0 flex items-center bg-[linear-gradient(90deg,#02040d_0%,#04060e_22%,#010716_40%,#12131a_44%,#010614_52%,#020208_66%,#000004_100%)]">
      <TaskbarApp label="Start">
        <svg viewBox="0 0 16 16" className="w-4 h-4" fill="#fff"><path d="M0 2.3L6.5 1.4v6.1H0zM7.3 1.3L16 0v7.5H7.3zM0 8.3h6.5v6.2L0 13.6zM7.3 8.3H16V16l-8.7-1.3z" /></svg>
      </TaskbarApp>
      <TaskbarApp label="Search">
        <svg viewBox="0 0 16 16" className="w-4 h-4" fill="none"><circle cx="8" cy="8" r="6.5" stroke="#fff" strokeWidth="2" /></svg>
      </TaskbarApp>
      <div className="flex gap-px pl-[3px]">
        <TaskbarApp label="File Explorer">
          <svg viewBox="0 0 22 20" className="w-[22px] h-5" fill="none">
            <path d="M0 2l1-1h6l2 2h12v16H0z" fill="#ffe08a" />
            <path d="M1 1h6l1 2H1z" fill="#f0b840" />
            <path d="M4 10.5h14v8.5h-4v-4H8v4H4z" fill="#38b0e8" />
          </svg>
        </TaskbarApp>
        <TaskbarApp label="Chrome" state="running">
          <svg viewBox="0 0 22 22" className="w-[22px] h-[22px]">
            <circle cx="11" cy="11" r="11" fill="#ffcd42" />
            <path d="M11 11L1.5 5.5A11 11 0 0 1 20.5 5.5H11z" fill="#db4437" />
            <path d="M1.5 5.5A11 11 0 0 0 10.5 22l5-8.5H6.2z" fill="#0f9d58" />
            <circle cx="11" cy="11" r="5.2" fill="#fff" />
            <circle cx="11" cy="11" r="4.2" fill="#4285f4" />
          </svg>
        </TaskbarApp>
        <TaskbarApp label="Inkscape" state="active">
          <InkscapeLogo className="w-[22px] h-[22px]" />
        </TaskbarApp>
      </div>
      <div className="flex-1" />
      <ul className="flex gap-2 mr-[6px]">
        {trayIcons.map(([name, icon]) => (
          <li key={name} title={name}><Svg16>{icon}</Svg16></li>
        ))}
      </ul>
      <div className="w-[152px] h-full bg-white" />
      <div className="w-[5px] h-full bg-[#0c0a0a] border-l border-[#777]" />
    </div>
  );
}

// ─── App ─────────────────────────────────────────────────────────────────────

export default function App() {
  return (
    <div className="relative h-screen w-full flex flex-col overflow-hidden text-xs leading-4 text-black bg-white font-['Roboto','Open_Sans',sans-serif]">
      <SharedGradients />
      <TitleBar />
      <MenuBar />
      <ControlBar />
      <main className="flex-1 min-h-0 flex">
        <Toolbox />
        <DocumentArea />
        <aside className="shrink-0 flex pl-[6px] bg-[#f0f0f0]">
          <div className="w-[2px] border-l border-[#a0a0a0] bg-white" />
          <div className="flex bg-white">
            <BarColumn groups={commandGroups} more />
            <BarColumn groups={snapGroups} />
          </div>
        </aside>
      </main>
      <PaletteBar />
      <StatusBar />
      <Taskbar />

      {/* Hand-drawn ring over the transform toggles */}
      <svg viewBox="0 0 80 74" className="absolute left-[715px] top-[51px] w-20 h-[74px] pointer-events-none" fill="none" aria-hidden="true">
        <ellipse cx="40" cy="36.5" rx="36.5" ry="33" stroke="#000" strokeWidth="5" />
      </svg>
    </div>
  );
}
